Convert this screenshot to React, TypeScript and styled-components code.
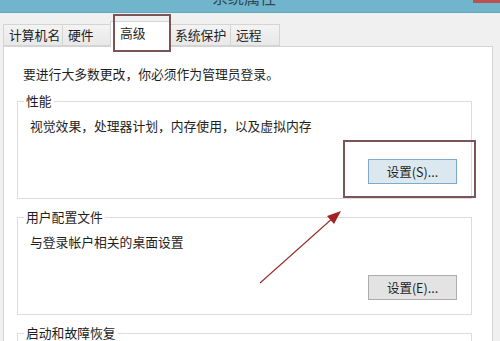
import React from "react";
import styled, { createGlobalStyle } from "styled-components";

const GlobalStyle = createGlobalStyle`
  html, body {
    margin: 0;
    padding: 0;
    background: #f0f0f0;
  }
  body {
    font-family: "Noto Sans CJK SC", "Liberation Sans", sans-serif;
    color: #1e1e1e;
  }
`;

const Window = styled.div`
  position: relative;
  width: 500px;
  height: 341px;
  overflow: hidden;
  display: flex;
  flex-flow: column nowrap;
  background: #f0f0f0;
`;

const TitleBar = styled.div`
  position: relative;
  height: 12px;
  flex: none;
  background: #70b5cc;
  border-bottom: 1px solid #62a6bd;
  overflow: hidden;
  display: flex;
  justify-content: center;
  padding-right: 12px;
`;

const TitleText = styled.div`
  font-size: 16px;
  line-height: 16px;
  margin-top: -11px;
  color: #2f4a55;
`;

const CloseButton = styled.div`
  position: absolute;
  top: 0;
  right: 0;
  width: 27px;
  height: 3px;
  background: #b9534f;
`;

const Body = styled.div`
  flex: 1;
  display: flex;
  flex-flow: column nowrap;
  padding: 11px 0 0 3px;
`;

const TabStrip = styled.div`
  display: flex;
  flex-flow: row nowrap;
  align-items: flex-end;
  height: 22px;
  position: relative;
  z-index: 1;
`;

const Tab = styled.div<{ $active?: boolean; $width: number }>`
  box-sizing: border-box;
  width: ${(p) => p.$width}px;
  height: ${(p) => (p.$active ? 26 : 22)}px;
  margin-left: -1px;
  margin-bottom: ${(p) => (p.$active ? -1 : 0)}px;
  padding: ${(p) => (p.$active ? "3px 0 0 9px" : "0 0 0 5px")};
  display: flex;
  align-items: ${(p) => (p.$active ? "flex-start" : "center")};
  font-size: 12.8px;
  line-height: 16px;
  white-space: nowrap;
  background: ${(p) => (p.$active ? "#ffffff" : "linear-gradient(#f3f3f3, #e8e8e8)")};
  border: 1px solid #d4d4d4;
  border-bottom: ${(p) => (p.$active ? "none" : "1px solid #d4d4d4")};

  &:first-child {
    margin-left: 0;
  }
`;

const Panel = styled.div`
  flex: 1;
  width: 490px;
  box-sizing: border-box;
  background: #ffffff;
  border: 1px solid #d4d4d4;
  border-bottom: none;
  padding: 19px 20px 0 13px;
  display: flex;
  flex-flow: column nowrap;
`;

const Intro = styled.div`
  font-size: 12.8px;
  line-height: 16px;
  margin-left: 6px;
  margin-bottom: 11px;
`;

const Group = styled.fieldset<{ $open?: boolean }>`
  margin: 0 0 10px 0;
  padding: 0 14px 14px 6px;
  border: 1px solid #dcdcdc;
  display: flex;
  flex-flow: column nowrap;
  min-width: 0;
  min-height: ${(p) => (p.$open ? "60px" : "auto")};
`;

const Legend = styled.legend`
  padding: 0 2px;
  font-size: 12.8px;
  line-height: 16px;
  color: #1e1e1e;
`;

const Description = styled.div`
  margin: 9px 0 0 6px;
  font-size: 12.8px;
  line-height: 16px;
`;

const Settings = styled.button<{ $focused?: boolean }>`
  align-self: flex-end;
  margin-top: 25px;
  width: 89px;
  height: 25px;
  box-sizing: border-box;
  font-family: "Noto Sans CJK SC", "Liberation Sans", sans-serif;
  font-size: 12.5px;
  color: #1e1e1e;
  background: ${(p) => (p.$focused ? "#dce8f0" : "#e3e3e3")};
  border: 1px solid ${(p) => (p.$focused ? "#7fabc8" : "#adadad")};
  padding: 0;
`;

const Highlight = styled.div<{ $x: number; $y: number; $w: number; $h: number }>`
  position: absolute;
  left: ${(p) => p.$x}px;
  top: ${(p) => p.$y}px;
  width: ${(p) => p.$w}px;
  height: ${(p) => p.$h}px;
  box-sizing: border-box;
  border: 2px solid #7a5558;
  pointer-events: none;
  z-index: 2;
`;

const ArrowLayer = styled.svg`
  position: absolute;
  left: 0;
  top: 0;
  pointer-events: none;
  z-index: 2;
`;

const tabs = [
  { label: "计算机名", width: 60 },
  { label: "硬件", width: 49 },
  { label: "高级", width: 60, active: true },
  { label: "系统保护", width: 62 },
  { label: "远程", width: 50 },
];

export default function App() {
  return (
    <Window>
      <GlobalStyle />
      <TitleBar>
        <TitleText>系统属性</TitleText>
        <CloseButton />
      </TitleBar>
      <Body>
        <TabStrip>
          {tabs.map((t) => (
            <Tab key={t.label} $active={t.active} $width={t.width}>
              {t.label}
            </Tab>
          ))}
        </TabStrip>
        <Panel>
          <Intro>要进行大多数更改，你必须作为管理员登录。</Intro>
          <Group>
            <Legend>性能</Legend>
            <Description>视觉效果，处理器计划，内存使用，以及虚拟内存</Description>
            <Settings $focused>设置(S)...</Settings>
          </Group>
          <Group>
            <Legend>用户配置文件</Legend>
            <Description>与登录帐户相关的桌面设置</Description>
            <Settings>设置(E)...</Settings>
          </Group>
          <Group $open>
            <Legend>启动和故障恢复</Legend>
          </Group>
        </Panel>
      </Body>
      <Highlight $x={113} $y={14} $w={58} $h={38} />
      <Highlight $x={343} $y={140} $w={133} $h={58} />
      <ArrowLayer width="500" height="341" viewBox="0 0 500 341">
        <line x1="260" y1="283" x2="334" y2="217" stroke="#9a2a2a" strokeWidth="1.1" />
        <polygon points="341,211 327,216 334,224" fill="#a52222" />
      </ArrowLayer>
    </Window>
  );
}
